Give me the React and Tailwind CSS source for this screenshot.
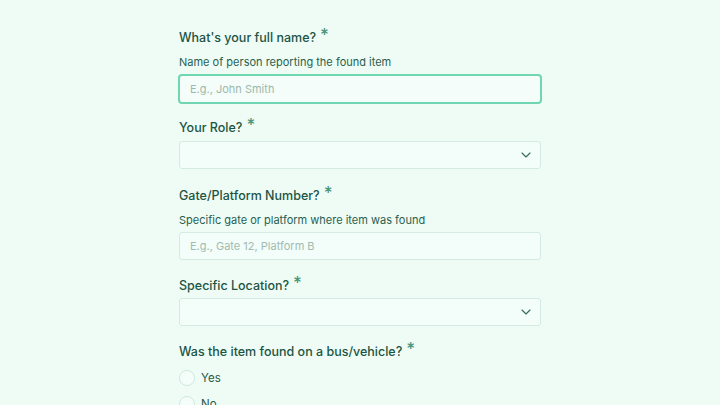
import { ChevronDown } from "lucide-react";

const font = { fontFamily: "Inter, 'Liberation Sans', sans-serif" };

function Label({ children }) {
  return (
    <div className="flex items-start text-[12.5px] leading-5 font-medium text-[#1c5443]">
      <span>{children}</span>
      <span className="ml-[4px] -mt-[1px] text-[17px] leading-[16px] text-[#4a9479]">*</span>
    </div>
  );
}

function Helper({ children }) {
  return <p className="mt-[5px] text-[11px] leading-[18px] text-[#285f4f]">{children}</p>;
}

function Select() {
  return (
    <div className="flex h-7 items-center justify-end rounded-[3px] border border-[#d3ebe2] bg-[#f3fdf9] pr-[6px]">
      <ChevronDown className="h-4 w-4 text-[#3c6e5e]" strokeWidth={1.75} />
    </div>
  );
}

export default function App() {
  return (
    <div className="min-h-[405px] w-full bg-[#effcf6] overflow-hidden" style={font}>
      <div className="mx-auto w-[362px] pt-[28px]">
        <Label>What's your full name?</Label>
        <Helper>Name of person reporting the found item</Helper>
        <div className="mt-[3px] -mx-px flex h-[30px] items-center rounded-[4px] border-2 border-[#6fd6b1] bg-[#f4fdf9] px-[10px] text-[11px] text-[#9db8ad]">
          E.g., John Smith
        </div>

        <div className="mt-[14px]">
          <Label>Your Role?</Label>
          <div className="mt-[3px]">
            <Select />
          </div>
        </div>

        <div className="mt-[17px]">
          <Label>Gate/Platform Number?</Label>
          <Helper>Specific gate or platform where item was found</Helper>
          <div className="mt-[3px] flex h-7 items-center rounded-[3px] border border-[#d3ebe2] bg-[#f3fdf9] px-[10px] text-[11px] text-[#a1bbb1]">
            E.g., Gate 12, Platform B
          </div>
        </div>

        <div className="mt-[16px]">
          <Label>Specific Location?</Label>
          <div className="mt-[2px]">
            <Select />
          </div>
        </div>

        <div className="mt-4">
          <Label>Was the item found on a bus/vehicle?</Label>
          <div className="mt-[8px] flex flex-col gap-[10px]">
            {["Yes", "No"].map((o) => (
              <label key={o} className="flex items-center gap-[6px] text-[11.5px] leading-4 text-[#1f5846]">
                <span className="h-4 w-4 rounded-full border border-[#cfe8de] bg-[#f5fdfa]" />
                {o}
              </label>
            ))}
          </div>
        </div>
      </div>
    </div>
  );
}
